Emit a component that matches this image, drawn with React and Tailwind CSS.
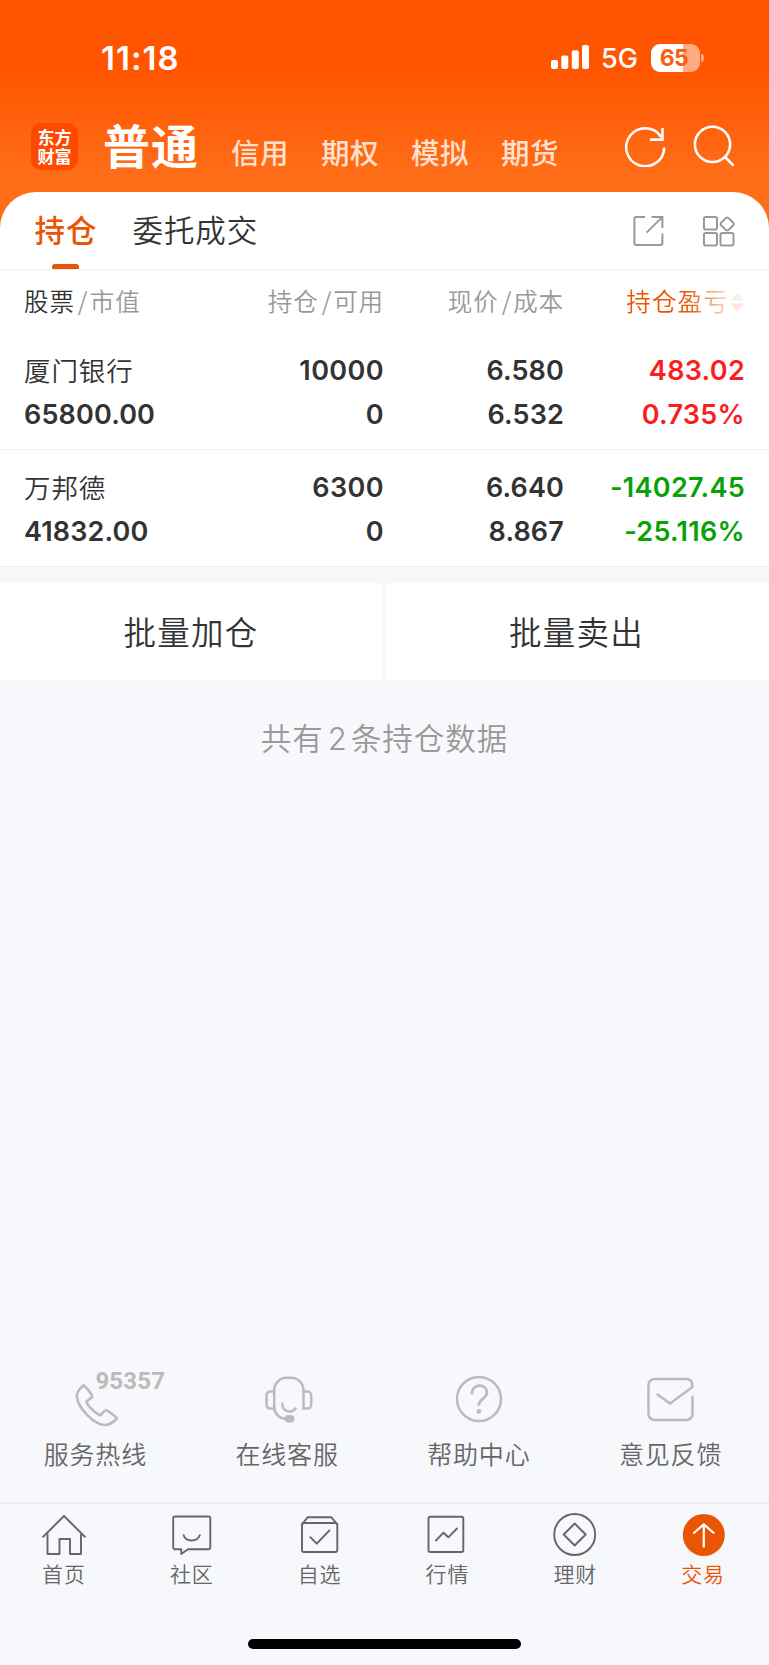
import React from "react";

const CJK = "font-['Noto_Sans_CJK_SC',sans-serif]";

function StatusBar() {
  return (
    <div className="flex h-[110px] items-start pt-[37px] text-white">
      <div className="ml-[101px] w-[100px] text-[33px] leading-[42px] font-semibold tracking-[1px]">11:18</div>
      <svg className="mt-[8px] ml-[350px] h-6 w-[38px] shrink-0" viewBox="0 0 38 24" fill="#fff">
        <rect x="0" y="15" width="7" height="9" rx="2" />
        <rect x="10.3" y="10.5" width="7" height="13.5" rx="2" />
        <rect x="20.8" y="5.2" width="7" height="18.8" rx="2" />
        <rect x="31" y="0" width="7" height="24" rx="2" />
      </svg>
      <div className="mt-px ml-[12px] w-[38px] text-[27px] leading-[42px] font-[450] whitespace-nowrap">5G</div>
      <div className="mt-[6.5px] ml-[11.5px] flex items-center">
        <div className="flex h-7 w-[49px] items-center justify-center rounded-[9px] bg-[linear-gradient(to_right,#fff_66%,#ffaa80_66%)] pr-[2px] text-[23px] leading-7 font-bold tracking-[-0.5px] text-[#fb5c10]">
          65
        </div>
        <div className="ml-[1.5px] h-2 w-[3px] rounded-r-full bg-[#ffaa80]" />
      </div>
    </div>
  );
}

function Header() {
  return (
    <div className={`flex h-[82px] items-start text-white ${CJK}`}>
      <div className="mt-[13px] ml-[31px] flex h-[47px] w-[47px] items-center justify-center rounded-[11px] bg-[#ff4800] text-[17px] leading-[19px] font-bold">
        <p className="mt-[-1px]">
          东方
          <br />
          财富
        </p>
      </div>
      <div className="mt-[4px] ml-[25px] w-[128px] text-[47px] leading-[60px] font-bold tracking-[1px] whitespace-nowrap">普通</div>
      <div className="mt-[22px] flex text-[28.5px] leading-[40px] font-medium tracking-[0.5px] whitespace-nowrap text-[#ffe0cf]">
        <span className="w-[90px]">信用</span>
        <span className="w-[90px]">期权</span>
        <span className="w-[90px]">模拟</span>
        <span className="w-[90px]">期货</span>
      </div>
      <svg className="mt-[15px] ml-[34px] h-[42px] w-[42px] shrink-0" viewBox="0 0 42 42" fill="none" stroke="#fff" strokeWidth="2.6">
        <path d="M39.2 22.4A19 19 0 1 1 36.2 12" />
        <path d="M37.5 3v11.6H25" />
      </svg>
      <svg className="mt-[15px] ml-[26px] h-[42px] w-[42px] shrink-0" viewBox="0 0 42 42" fill="none" stroke="#fff" strokeWidth="2.6">
        <circle cx="19.5" cy="19.4" r="17.6" />
        <path d="M32 32l8.6 8.6" />
      </svg>
    </div>
  );
}

function Tabs() {
  return (
    <div className={`flex h-[78px] items-start border-b border-[#efefef] ${CJK}`}>
      <div className="ml-[35px] flex w-[61px] flex-col items-center">
        <div className="mt-[15px] ml-px h-[44px] text-[30.5px] leading-[44px] font-medium tracking-[1px] whitespace-nowrap text-[#ea5504]">持仓</div>
        <div className="mt-[13px] mr-px h-[5px] w-[27px] rounded-t-[3px] rounded-b-[1px] bg-[#ea5504]" />
      </div>
      <div className="mt-[15px] ml-[36.5px] text-[30.5px] leading-[44px] font-[350] tracking-[0.9px] text-[#333]">委托成交</div>
      <div className="mt-[23px] mr-[34px] ml-auto flex gap-[39px]">
        <svg className="h-8 w-[31px]" viewBox="0 0 31 32" fill="none" stroke="#999" strokeWidth="2">
          <path d="M12 2H3.2A1.8 1.8 0 0 0 1.4 3.8v24.4A1.8 1.8 0 0 0 3.2 30h24.4a1.8 1.8 0 0 0 1.8-1.8V18.5" />
          <path d="M18.5 2h10.9v11M29 2.4L13.6 17.6" />
        </svg>
        <svg className="h-8 w-8" viewBox="0 0 32 32" fill="none" stroke="#999" strokeWidth="2">
          <rect x="1" y="2" width="13" height="12.5" rx="1.8" />
          <rect x="1" y="18" width="13" height="12.5" rx="1.8" />
          <rect x="17.5" y="18" width="13" height="12.5" rx="1.8" />
          <rect x="19" y="3.8" width="10.4" height="10.4" rx="2.4" transform="rotate(45 24.2 9)" />
        </svg>
      </div>
    </div>
  );
}

const COLS = "grid grid-cols-[190px_170px_180px_181px] pl-6 pr-6";

function TableHead() {
  return (
    <div className={`${COLS} h-[76px] items-start pt-[12px] text-[24.5px] leading-[38px] font-[350] tracking-[0.9px] whitespace-nowrap text-[#999] ${CJK}`}>
      <div>
        <span className="text-[#333]">股票</span>
        <span className="mr-[1.5px] ml-[3px]">/</span>市值
      </div>
      <div className="text-right">
        持仓<span className="mr-px ml-[3px]">/</span>可用
      </div>
      <div className="text-right">
        现价<span className="mr-px ml-[3px]">/</span>成本
      </div>
      <div className="flex items-center justify-end text-[#ea5504] [mask-image:linear-gradient(to_right,#000_122px,rgba(0,0,0,0.15)_168px,rgba(0,0,0,0.12))]">
        <span className="tracking-[1.2px]">持仓盈亏</span>
        <svg className="mt-[2px] ml-px h-5 w-[15px]" viewBox="0 0 15 20">
          <path d="M0.5 8.5L7.5 0.5L14.5 8.5Z" fill="#999" />
          <path d="M0.5 11.5L7.5 19.5L14.5 11.5Z" fill="#ea5504" />
        </svg>
      </div>
    </div>
  );
}

const HOLDINGS = [
  { name: "厦门银行", value: "65800.00", qty: "10000", avail: "0", price: "6.580", cost: "6.532", profit: "483.02", rate: "0.735%", tone: "text-[#fa1e1e]" },
  { name: "万邦德", value: "41832.00", qty: "6300", avail: "0", price: "6.640", cost: "8.867", profit: "-14027.45", rate: "-25.116%", tone: "text-[#06a206]" },
];

function Holding({ item, first }) {
  return (
    <div className={`${COLS} ${first ? "h-[104px] pt-[3px]" : "h-[117px] pt-[16px]"} border-b border-[#efefef] text-[27px] leading-[44px] font-semibold tracking-[0.15px] text-[#333]`}>
      <div>
        <div className={`mt-[-1px] h-[45px] text-[26.5px] font-[350] tracking-[0.9px] ${CJK}`}>{item.name}</div>
        <div>{item.value}</div>
      </div>
      <div className="text-right tracking-[0.4px]">
        <div>{item.qty}</div>
        <div>{item.avail}</div>
      </div>
      <div className="text-right">
        <div>{item.price}</div>
        <div>{item.cost}</div>
      </div>
      <div className={`text-right tracking-[0.3px] ${item.tone}`}>
        <div>{item.profit}</div>
        <div>{item.rate}</div>
      </div>
    </div>
  );
}

function BatchActions() {
  return (
    <div className={`mt-4 grid h-[97px] grid-cols-[382px_383px] gap-1 overflow-hidden text-center text-[32.5px] leading-[95px] font-[350] tracking-[1.2px] text-[#333] ${CJK}`}>
      <div className="bg-white">批量加仓</div>
      <div className="bg-white pr-[2px]">批量卖出</div>
    </div>
  );
}

const SERVICES = [
  {
    label: "服务热线",
    art: (
      <div className="relative h-[54px] w-[100px]">
        <svg className="h-[54px] w-[100px]" viewBox="46 1371 100 54" overflow="visible" fill="none" stroke="#bbb" strokeWidth="2.6" strokeLinejoin="round">
          <path d="M83.6 1385.2Q76.5 1391 76.8 1396.5C78 1408 94 1425 105.5 1425Q110.5 1425 116.8 1418.8Q116.5 1416.6 106.5 1410.2Q104 1410.5 100.6 1415.3C96 1414 87 1405.5 86.6 1401.6L92.3 1397Q91 1392 83.6 1385.2Z" />
        </svg>
        <div className="absolute top-0 left-[49.5px] font-['Roboto',sans-serif] text-[24px] leading-5 font-bold tracking-[0.2px] text-[#bbb]">95357</div>
      </div>
    ),
  },
  {
    label: "在线客服",
    art: (
      <svg className="ml-[2px] h-[54px] w-[48px]" viewBox="265 1371 48 54" fill="none" stroke="#bbb" strokeWidth="2.5" strokeLinecap="round">
        <path d="M274.2 1408.6h-4a3.7 3.7 0 0 1-3.7-3.7v-9.6a3.7 3.7 0 0 1 3.7-3.7h4" />
        <path d="M303.5 1391.6h4a3.7 3.7 0 0 1 3.7 3.7v9.6a3.7 3.7 0 0 1-3.7 3.7h-4z" />
        <path d="M303.5 1391.6v-1.6a12.5 12.5 0 0 0-12.5-12.3h-4.3a12.5 12.5 0 0 0-12.5 12.3v17.5a11.5 11.5 0 0 0 11.3 11.2" />
        <path d="M282.3 1403.6c0 9 9.5 10 13.3 4.7" />
        <rect x="285.8" y="1416.3" width="7.4" height="5" rx="2.5" fill="#bbb" />
      </svg>
    ),
  },
  {
    label: "帮助中心",
    art: (
      <svg className="h-[54px] w-[50px]" viewBox="455 1371 50 54" fill="none" stroke="#bbb" strokeWidth="2.5">
        <circle cx="480" cy="1399" r="22" />
        <path d="M472.7 1394.3c0-11.5 15.3-11 15.3-1.8c0 6-8.3 6.3-8.3 13.3" strokeWidth="2.8" />
        <circle cx="479.8" cy="1411.4" r="2.4" fill="#bbb" stroke="none" />
      </svg>
    ),
  },
  {
    label: "意见反馈",
    art: (
      <svg className="h-[54px] w-[50px]" viewBox="648 1371 50 54" fill="none" stroke="#bbb" strokeWidth="2.5" strokeLinecap="round" strokeLinejoin="round">
        <path d="M694.5 1396.8v17.2a6 6 0 0 1-6 6h-32a6 6 0 0 1-6-6v-29a6 6 0 0 1 6-6h32q6 0 6 8L672 1403.6L659.5 1394.5" />
      </svg>
    ),
  },
];

function Services() {
  return (
    <div className="grid w-[767px] grid-cols-4">
      {SERVICES.map((s) => (
        <div key={s.label} className="flex flex-col items-center">
          {s.art}
          <div className={`mt-[9px] mr-px text-[25px] leading-[38px] font-[350] tracking-[0.8px] text-[#666] ${CJK}`}>{s.label}</div>
        </div>
      ))}
    </div>
  );
}

const NAV = [
  {
    label: "首页",
    art: (
      <g>
        <path d="M2.5 24.3L24 3L45.5 24.3" />
        <path d="M7.5 20.5V41h12V26h10.5v15H41V20.5" />
      </g>
    ),
  },
  {
    label: "社区",
    art: (
      <g>
        <path d="M7 3.5h33.5a1.8 1.8 0 0 1 1.8 1.8v29.2a1.8 1.8 0 0 1-1.8 1.8H20L13.3 41V36.3H7a1.8 1.8 0 0 1-1.8-1.8V5.3A1.8 1.8 0 0 1 7 3.5Z" />
        <path d="M15.3 21.5c2.5 8 14 8 16.8 0" />
      </g>
    ),
  },
  {
    label: "自选",
    art: (
      <g>
        <rect x="6" y="10" width="35.3" height="29" rx="1.8" />
        <path d="M6 11.5L11.5 4.3h24L41.3 11.5" />
        <path d="M13.8 23.6L20.7 30.7L34 16.8" />
      </g>
    ),
  },
  {
    label: "行情",
    art: (
      <g>
        <rect x="5.5" y="3.8" width="34.8" height="35.2" rx="1.8" />
        <path d="M12.5 28L20.5 19.7L25.3 24.3L34.5 15" />
      </g>
    ),
  },
  {
    label: "理财",
    art: (
      <g>
        <circle cx="23.7" cy="21.5" r="20.5" />
        <path d="M23.7 10.5L34.7 21.5L23.7 32.5L12.7 21.5Z" />
      </g>
    ),
  },
  {
    label: "交易",
    active: true,
    art: (
      <g>
        <circle cx="24.8" cy="22" r="21" fill="#ea5504" stroke="none" />
        <path d="M24.8 34.5V11.5M14.3 20.5L24.8 11.3L35.3 20.5" stroke="#fff" strokeWidth="2.2" />
      </g>
    ),
  },
];

function BottomNav() {
  return (
    <div className="border-t-2 border-[#e9eaec] pt-[9px]">
      <div className="grid w-[767px] grid-cols-6">
        {NAV.map((n) => (
          <div key={n.label} className="flex flex-col items-center">
            <svg className="h-[44px] w-12" viewBox="0 0 48 44" fill="none" stroke="#666" strokeWidth="1.9" strokeLinejoin="round">
              {n.art}
            </svg>
            <div className={`mt-[-1px] mb-[5px] text-[21px] leading-[34px] font-[350] tracking-[0.8px] ${n.active ? "text-[#ea5504]" : "text-[#666]"} ${CJK}`}>{n.label}</div>
          </div>
        ))}
      </div>
    </div>
  );
}

export default function App() {
  return (
    <div className="flex h-[1665px] w-[769px] flex-col overflow-hidden bg-[#f7f8fb] font-['Inter','Noto_Sans_CJK_SC',sans-serif]">
      <div className="bg-[linear-gradient(to_bottom,#ff5500_0px,#ff5500_70px,#ff6f1a_185px)]">
        <StatusBar />
        <Header />
        <div className="rounded-t-[36px] bg-white">
          <Tabs />
          <TableHead />
        </div>
      </div>
      <div className="bg-white">
        {HOLDINGS.map((h, i) => (
          <Holding key={h.name} item={h} first={i === 0} />
        ))}
      </div>
      <BatchActions />
      <div className={`mt-[35px] text-center text-[30.5px] leading-[44px] font-[350] tracking-[1px] text-[#999] ${CJK}`}>
        共有<span className="mr-[4px] ml-[4px] font-['Inter',sans-serif] text-[31px] leading-[30px] tracking-[0]">2</span>条持仓数据
      </div>
      <div className="mt-auto">
        <Services />
        <div className="h-[30px]" />
        <BottomNav />
        <div className="flex h-[70px] justify-center pt-[44px]">
          <div className="h-[10px] w-[273px] rounded-full bg-black" />
        </div>
      </div>
    </div>
  );
}
